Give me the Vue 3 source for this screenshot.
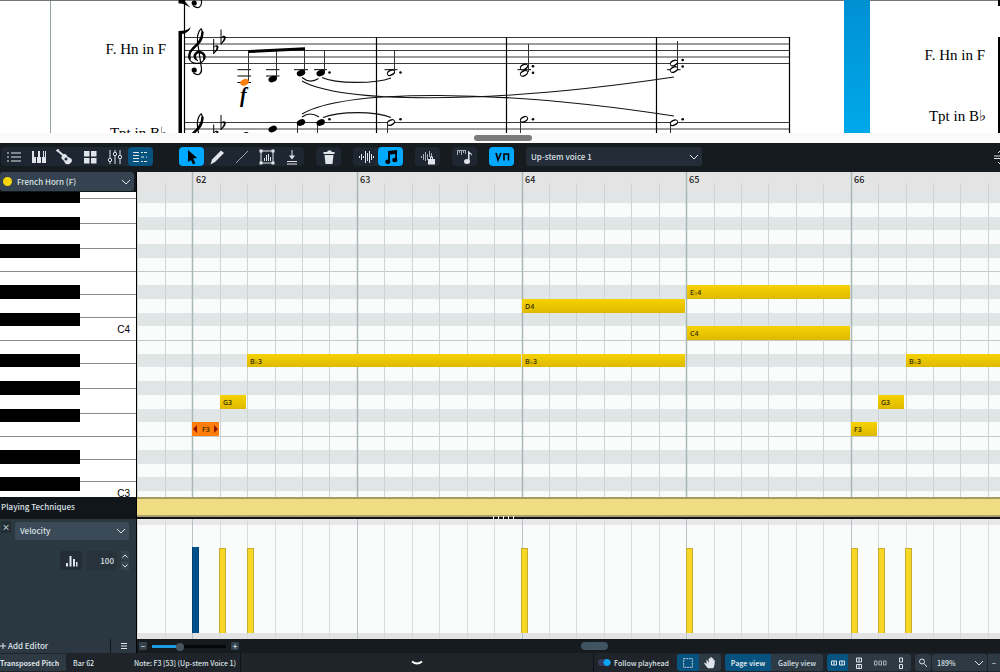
<template>
  <div class="app">
    <svg class="score" role="img" aria-label="Score">
      <defs>
        <linearGradient id="pageGap" x1="0" y1="0" x2="0" y2="1">
          <stop offset="0" stop-color="#0090d2" />
          <stop offset="1" stop-color="#00a9ea" />
        </linearGradient>
        <g id="clef" fill="none" stroke="#000" stroke-linecap="round">
          <path d="M-1 35.5C4 39 7.500 36 7 31L3 4C2 -4 6 -9 7 -8.500C9 -3 8 3 3 7.500C-2 11.500 -6 14.500 -5.500 20C-4.500 27 7 28 9.800 21.500C11 15.500 4 12.500 1 16.500C-.5 19.500 1 22 3 23" stroke-width="1.200" />
          <path d="M8 -5C8 2 2 8 -2 11.500C-5 14.500 -5.500 18 -4.800 21" stroke-width="2.400" />
          <path d="M9.800 21C11 15.500 4 12.500 1 16.500C0 18 .2 20 1 21" stroke-width="2.400" />
          <circle cx="-.3" cy="32.500" r="2.600" fill="#000" stroke="none" />
        </g>
        <g id="flat">
          <path d="M0 0V15" stroke="#000" stroke-width="1" />
          <path d="M0 8C2 5.500 5 6 4.800 8.500C4.600 11 2 13 0 15V13.500C1.500 12 2.800 10 2.800 8.500C2.800 7 1.200 7.500 0 9Z" />
        </g>
        <ellipse id="head" rx="4.400" ry="3.100" transform="rotate(-24)" />
        <g id="half" transform="rotate(-28)">
          <ellipse rx="4.300" ry="3" />
          <ellipse rx="3.500" ry="1.600" fill="#fff" />
        </g>
      </defs>

      <path d="M0 .5H3000" stroke="#777" />
      <path d="M50.500 1V133" stroke="#8fa3a5" />
      <path v-for="y in staffLines" :key="y" :d="`M184 ${y}H790`" stroke="#222" stroke-width=".9" />
      <path d="M184.500 0V133M376.500 37V133M506.500 37V133M656.500 37V133M789.500 37V133" stroke="#000" stroke-width="1.200" />
      <path d="M178.500 31H182V133H178.500ZM178.500 31C184 31 188 30 190.500 27C190 31 186 33.500 182 34H178.500Z" />
      <path d="M178.500 0H184C186 3 188 5 190.500 7.500C187 6 184 3.500 181 3.500H178.500Z" />
      <use href="#clef" x="194.500" y="-29.500" />
      <use href="#clef" x="194.500" y="37.500" />
      <use href="#clef" x="194.500" y="122.500" />
      <use href="#flat" x="213.700" y="39" />
      <use href="#flat" x="221" y="29.500" />
      <use href="#flat" x="213.700" y="124.500" />
      <use href="#flat" x="221" y="115" />

      <path d="M237.500 69.700H251M237.500 76H251M237.500 82.500H251M266 69.700H279.500M266 76H279.500M294 69.700H308M314 69.700H327M384.500 69.700H397.500M517.500 69.700H531M667 69.700H680.500" stroke="#000" />
      <path d="M248.500 51V81M276.500 51V78M304.500 49V72M324.500 51V72M394.500 51V72M528.500 44V72M677.500 41V69M297.500 123V133M317.500 123V133M387.500 123V133M520.500 120V133M670.500 123V133" stroke="#333" />
      <path d="M248.500 50L305 47.300V50.300L248.500 53Z" />
      <use v-for="(n, i) in heads" :key="'h' + i" href="#head" :transform="`translate(${n[0]} ${n[1]})`" :fill="i === 0 ? '#ff7f0e' : '#000'" />
      <use v-for="(n, i) in halves" :key="'o' + i" href="#half" :transform="`translate(${n[0]} ${n[1]})`" />
      <circle v-for="(n, i) in dots" :key="'d' + i" :cx="n[0]" :cy="n[1]" r="1.300" />
      <g fill="none" stroke="#111">
        <path d="M302 77.500Q310 84 318.500 78.500M322 77.500C336 84 375 84 391 78M302 117Q310 111 319 117M323 117.500C340 111 375 111 391 117.500" stroke-width="1.200" />
        <path d="M302 81C340 102 480 106 674 77M302 114C345 89 500 89 674 116" stroke-width="1.100" />
      </g>
      <text x="240" y="102" class="dynamic">f</text>
      <text x="166" y="54" class="staff-name">F. Hn in F</text>
      <text x="167" y="138" class="staff-name">Tpt in B♭</text>

      <rect x="844" y="0" width="26" height="133" fill="url(#pageGap)" />
      <text x="985" y="60" class="staff-name">F. Hn in F</text>
      <text x="986" y="121" class="staff-name">Tpt in B♭</text>
      <path d="M998 0H1000V6H998ZM998 37H1000V133H998Z" />
    </svg>

    <div class="splitter"><span></span></div>

    <nav class="toolbar">
      <div class="group panels">
        <button aria-label="Track list"><svg viewBox="0 0 18 16"><path d="M6 4H16M6 8H16M6 12H16M2 4H4M2 8H4M2 12H4" class="line" /></svg></button>
        <button aria-label="Keyboard"><svg viewBox="0 0 18 16"><path d="M2 2H4V8H6V14H2ZM7 8H8V2H10V8H11V14H7ZM12 8H13V2H14V8H16V14H12Z" /><path d="M15 2H16V14H15Z" /></svg></button>
        <button aria-label="Fretboard"><svg viewBox="0 0 18 16"><path d="M2 1L9 7" stroke="#dfe5ea" stroke-width="2" /><path d="M1 2L4 0" class="line" /><path d="M7 7C8 4 12 5 12 7C13 9 16 8 17 11C17 14 14 16 11 15C9 14 10 12 8 11C6 10 6 8 7 7Z" /><circle cx="11" cy="10" r="1.500" fill="#1f2a35" /></svg></button>
        <button aria-label="Drum pads"><svg viewBox="0 0 18 16"><path d="M3 2H8.500V7.500H3ZM10 2H15.500V7.500H10ZM3 9H8.500V14.500H3ZM10 9H15.500V14.500H10Z" /></svg></button>
        <button aria-label="Mixer"><svg viewBox="0 0 18 16"><path d="M4 1V9M4 13V15M9 1V3M9 7V15M14 1V6M14 10V15" class="line" /><g fill="none" class="line"><circle cx="4" cy="11" r="1.700" /><circle cx="9" cy="5" r="1.700" /><circle cx="14" cy="8" r="1.700" /></g></svg></button>
        <button class="on-dark" aria-label="Key editor"><svg viewBox="0 0 18 16"><path d="M2 3.500H8M2 6.500H8M2 9.500H8M2 12.500H8M10 3.500H12M10 8H13M10 12.500H12M13 3.500H16M15 8H16M13 12.500H16" class="line" /></svg></button>
      </div>
      <div class="group tools">
        <button class="on" aria-label="Select"><svg viewBox="0 0 18 16"><path d="M5 1L14 9L10 9.500L12.500 14L10 15.500L8 11L5 13Z" fill="#000" /></svg></button>
        <button aria-label="Draw"><svg viewBox="0 0 18 16"><path d="M13 1.500L16 4L7 13L2.500 15.500L4 10.500Z" /></svg></button>
        <button aria-label="Line"><svg viewBox="0 0 18 16"><path d="M3 14L15 2" stroke="#9aa5ad" /></svg></button>
        <button aria-label="Transform"><svg viewBox="0 0 18 16"><path d="M3 2H15V14H3Z" fill="none" class="line" /><path d="M1.500 .5H4.500V3.500H1.500ZM13.500 .5H16.500V3.500H13.500ZM1.500 12.500H4.500V15.500H1.500ZM13.500 12.500H16.500V15.500H13.500Z" /><path d="M6.500 9V12M8.500 6V12M10.500 5V12M12.500 8V12" class="line" /></svg></button>
        <button aria-label="Quantize"><svg viewBox="0 0 18 16"><path d="M9 1V9M4 12.500H14M4 15H14" class="line" /><path d="M6 6.500H12L9 10.500Z" /></svg></button>
      </div>
      <div class="group"><button aria-label="Delete"><svg viewBox="0 0 18 16"><path d="M3.500 3H7L8 1.500H11L12 3H14.500V5H3.500ZM4.500 6H13.500L12.500 15H5.500Z" /></svg></button></div>
      <div class="group">
        <button aria-label="Played durations"><svg viewBox="0 0 18 16"><path d="M2.500 7V9M4.500 5V11M6.500 7V9M8.500 2V14M10.500 4V12M12.500 2V14M14.500 5V11M16.500 7V9" class="line" /></svg></button>
        <button class="on" aria-label="Notated durations"><svg viewBox="0 0 18 16"><path d="M6 2L15 1V11H13.200V5L8 5.600V13H6.200Z" fill="#000" /><ellipse cx="5.800" cy="12.700" rx="2.600" ry="2.200" fill="#000" /><ellipse cx="12.800" cy="11" rx="2.600" ry="2.200" fill="#000" /></svg></button>
      </div>
      <div class="group"><button aria-label="Lock durations"><svg viewBox="0 0 18 16"><path d="M2.500 7V9M4.500 5V11M6.500 3V12M8.500 5V11M10.500 2V8M12.500 4V8" class="line dim" /><path d="M9 10H16V15.500H9ZM11 10V8.500A1.500 1.500 0 0 1 14 8.500V10H13V8.800H12V10Z" /></svg></button></div>
      <div class="group"><button aria-label="Chord input"><svg viewBox="0 0 18 16"><path d="M1.500 1V6M3.500 1V4M5.500 1V6M7.500 1V4M9.500 1V5M1 1.500H10" class="line dim" /><path d="M12 1C12 3 17 4 16 7C15.500 5.500 14.500 5 13.500 5V12H12Z" /><ellipse cx="11" cy="12.500" rx="3" ry="2.500" /></svg></button></div>
      <div class="group"><button class="on" aria-label="Voices"><svg viewBox="0 0 18 16"><path d="M3 4L5 11L8 4" fill="none" stroke="#000" stroke-width="1.600" /><path d="M11 11.500V5H15.500V11.500" fill="none" stroke="#000" stroke-width="1.600" /></svg></button></div>
      <div class="drop voice">
        <select v-model="voice" aria-label="Voice"><option>Up-stem voice 1</option></select>
        <svg viewBox="0 0 10 10"><path d="M1 3L5 7L9 3" /></svg>
      </div>
      <svg class="edge-icon" viewBox="0 0 6 16"><path d="M0 7H6M0 9.500H6M4 4L6 2M4 13L6 15" class="line" /></svg>
    </nav>

    <main class="editor">
      <aside class="side">
        <div class="drop instrument">
          <i></i>
          <select v-model="instrument" aria-label="Instrument"><option>French Horn (F)</option></select>
          <svg viewBox="0 0 10 10"><path d="M1 3L5 7L9 3" /></svg>
        </div>
        <svg class="keyboard" role="img" aria-label="Keyboard">
          <path v-for="y in keyLines" :key="y" :d="`M0 ${y}.5H136`" stroke="#8a8a8a" />
          <rect v-for="m in blackKeys" :key="m" x="0" :y="top(m)" width="80" :height="top(m - 1) - top(m)" />
          <text x="130" y="141">C4</text>
          <text x="130" y="305">C3</text>
        </svg>
        <h2>Playing Techniques</h2>
        <section class="velocity">
          <button class="close" aria-label="Close">×</button>
          <div class="drop">
            <select v-model="lane" aria-label="Editor"><option>Velocity</option></select>
            <svg viewBox="0 0 10 10"><path d="M1 3L5 7L9 3" /></svg>
          </div>
          <div class="value">
            <button class="hist" aria-label="Histogram"><svg viewBox="0 0 18 16"><path d="M4 10H6V13.500H4ZM7.500 3H9.500V13.500H7.500ZM11 6H13V13.500H11ZM14 9H15.500V13.500H14Z" /></svg></button>
            <input v-model="velocity" type="text" aria-label="Velocity value">
            <div class="spin">
              <button aria-label="Increase"><svg viewBox="0 0 8 8"><path d="M1.500 5.500L4 3L6.500 5.500" /></svg></button>
              <button aria-label="Decrease"><svg viewBox="0 0 8 8"><path d="M1.500 2.500L4 5L6.500 2.500" /></svg></button>
            </div>
          </div>
        </section>
        <div class="add">
          <button><svg viewBox="0 0 8 8"><path d="M0 4H6M3 1V7" /></svg>Add Editor</button>
          <button class="menu" aria-label="Editor menu"><svg viewBox="0 0 8 8"><path d="M1 1.500H7M1 4H7M1 6.500H7" /></svg></button>
        </div>
      </aside>

      <div class="lanes">
        <svg class="roll" role="img" aria-label="Piano roll">
          <defs>
            <linearGradient id="noteFill" x1="0" y1="0" x2="0" y2="1">
              <stop offset="0" stop-color="#f6d204" />
              <stop offset="1" stop-color="#deb900" />
            </linearGradient>
          </defs>
          <rect width="100%" height="100%" fill="#fafbfb" />
          <rect v-for="m in blackKeys" :key="m" x="0" :y="top(m) + 20" width="100%" :height="top(m - 1) - top(m)" fill="#e0e5e5" />
          <rect width="100%" height="21" fill="#e4e4e4" />
          <path d="M0 99.500H3000M0 168.500H3000M0 264.500H3000" stroke="#c3caca" />
          <path v-for="b in beats" :key="b.x" :d="`M${b.x}.5 ${b.bar ? 0 : 11}V325`" :stroke="b.bar ? '#a9b7b7' : '#ccd4d4'" :stroke-width="b.bar ? 1.500 : 1" />
          <text v-for="(n, i) in [62, 63, 64, 65, 66]" :key="n" :x="barX(i) + 3" y="11" class="bar-no">{{ n }}</text>
          <g v-for="(n, i) in notes" :key="'n' + i">
            <rect :x="n.x" :y="top(n.m) + 20" :width="n.w" :height="top(n.m - 1) - top(n.m)" :fill="n.selected ? '#ff7d0a' : 'url(#noteFill)'" />
            <text :x="n.x + (n.selected ? 10 : 3)" :y="top(n.m) + 30" class="note">{{ n.name }}</text>
            <path v-if="n.selected" :d="`M${n.x + 1} ${top(n.m) + 27}l4 -4v8zM${n.x + 26} ${top(n.m) + 27}l-4 -4v8z`" fill="#8c1500" />
          </g>
        </svg>
        <div class="technique"><span></span></div>
        <svg class="bars" role="img" aria-label="Velocity">
          <rect width="100%" height="100%" fill="#fafbfb" />
          <rect width="100%" height="6" fill="#e9e7ea" />
          <rect y="114" width="100%" height="6" fill="#e3e3e3" />
          <path v-for="b in beats" :key="b.x" :d="`M${b.x}.5 0V120`" :stroke="b.bar ? '#b9c2c5' : '#d8dcde'" />
          <g v-for="(x, i) in velocityBars" :key="x">
            <rect :x="x" :y="i ? 29 : 28" :width="7" :height="i ? 85 : 86" :fill="i ? '#c4ad2c' : '#003f70'" />
            <rect :x="x + 1" :y="i ? 30 : 28" width="5" :height="i ? 84 : 86" :fill="i ? '#f7d827' : '#00508c'" />
          </g>
        </svg>
        <div class="scroll">
          <button aria-label="Zoom out">−</button>
          <input v-model="zoom" type="range" min="0" max="100" aria-label="Zoom">
          <button aria-label="Zoom in">+</button>
          <div class="track"><span></span></div>
        </div>
      </div>
    </main>

    <footer class="status">
      <div class="info">
        <button class="pitch">Transposed Pitch</button>
        <span>Bar 62</span>
        <span class="note-info">Note: F3 [53] (Up-stem Voice 1)</span>
      </div>
      <button class="fold" aria-label="Hide panel"><svg viewBox="0 0 12 6"><path d="M1 1.500Q6 5.500 11 1.500" /></svg></button>
      <div class="view">
        <label class="follow"><input v-model="follow" type="checkbox"><span>Follow playhead</span></label>
        <div class="set square">
          <button class="on-dark" aria-label="Marquee"><svg viewBox="0 0 16 16"><path d="M3 3H13V13H3Z" fill="none" class="line" stroke-dasharray="2 1" /></svg></button>
          <button aria-label="Hand"><svg viewBox="0 0 16 16"><path d="M4 9L2 7.500C1 7.500 1.500 9 2 9.500L5.500 14H11.500C13 12 13.500 9 13.500 5C13 4 12 4.500 12 5.500V3C11.500 2 10.500 2 10.300 3V2C9.500 .8 8.500 1 8.300 2V3C7.500 2 6.500 2.500 6.500 3.500V8C6 7 4.500 3.500 4 4Z" /></svg></button>
        </div>
        <div class="set words">
          <button class="on-dark">Page view</button>
          <button>Galley view</button>
        </div>
        <div class="set arrange">
          <button class="on-dark" aria-label="Spreads horizontal"><svg viewBox="0 0 16 14"><path d="M1.500 5H6.500V9H1.500ZM4 5V9M9.500 5H14.500V9H9.500ZM12 5V9" /></svg></button>
          <button aria-label="Spreads vertical"><svg viewBox="0 0 16 14"><path d="M5.500 2H10.500V6H5.500ZM8 2V6M5.500 8.500H10.500V12.500H5.500ZM8 8.500V12.500" /></svg></button>
          <button aria-label="Single pages horizontal"><svg viewBox="0 0 16 14" class="dim"><path d="M2.500 5H5V9H2.500ZM7 5H9.500V9H7ZM11.500 5H14V9H11.500Z" /></svg></button>
          <button aria-label="Single pages vertical"><svg viewBox="0 0 16 14"><path d="M6.500 2H9.500V6H6.500ZM6.500 8.500H9.500V12.500H6.500Z" /></svg></button>
        </div>
        <div class="set find"><button aria-label="Find"><svg viewBox="0 0 16 14"><circle cx="7" cy="5.500" r="2.500" /><path d="M9 7.500L12 11" /></svg></button></div>
        <div class="drop zoom">
          <select v-model="scale" aria-label="Page zoom"><option>189%</option></select>
          <svg viewBox="0 0 10 10"><path d="M1 3L5 7L9 3" /></svg>
        </div>
        <button class="less" aria-label="Reduce zoom">−</button>
      </div>
    </footer>
  </div>
</template>

<script setup>
import { ref } from 'vue'

const voice = ref('Up-stem voice 1')
const instrument = ref('French Horn (F)')
const lane = ref('Velocity')
const velocity = ref('100')
const zoom = ref(37)
const follow = ref(true)
const scale = ref('189%')

// score
const staffLines = [37.5, 44, 50.5, 57, 63.5, 122.5, 129]
const heads = [[244.5, 82.3], [272.7, 79], [301, 73], [320.7, 73], [245, 135.5], [272.7, 129], [301, 122.5], [320.7, 122.5]]
const halves = [[391, 72.7], [524, 67], [524, 73.3], [674, 63], [674, 69.5], [391, 122.5], [524, 119.3], [674, 122.7]]
const dots = [
  [329.5, 72.5], [400.5, 72.5], [533, 66.3], [533, 72.7], [682.7, 60], [682.7, 66.5],
  [329.5, 119.3], [400.5, 119.3], [533, 119.3], [682.7, 119.3]
]

// piano roll: one row per semitone, measured from the top of the keyboard
const top = (midi) => Math.max(0, Math.round(134.3 + (60 - midi) * 13.72))
const blackKeys = [70, 68, 66, 63, 61, 58, 56, 54, 51, 49]
const keyLines = [6, 31, 56, 79, 102, 125, 148, 171, 196, 221, 244, 267, 289]

const BAR = 164.6
const barX = (i) => Math.round(55.5 + i * BAR)
const beats = []
for (let i = -2; i < 80; i++) {
  beats.push({ x: Math.round(55.3 + i * BAR / 6), bar: i % 6 === 0 })
}

const notes = [
  { name: 'F3', m: 53, x: 55, w: 27, selected: true },
  { name: 'G3', m: 55, x: 83, w: 26 },
  { name: 'B♭3', m: 58, x: 110, w: 274 },
  { name: 'B♭3', m: 58, x: 385, w: 163 },
  { name: 'D4', m: 62, x: 385, w: 163 },
  { name: 'E♭4', m: 63, x: 550, w: 163 },
  { name: 'C4', m: 60, x: 550, w: 163 },
  { name: 'F3', m: 53, x: 714, w: 26 },
  { name: 'G3', m: 55, x: 741, w: 26 },
  { name: 'B♭3', m: 58, x: 769, w: 274 }
]
const velocityBars = [55, 82, 110, 384, 549, 714, 741, 768]
</script>

<style>
body {
  margin: 0;
  background: #161b1f;
}
</style>

<style scoped>
.app {
  display: flex;
  flex-direction: column;
  overflow: hidden;
  font-family: "Noto Sans CJK SC", "Noto Sans", sans-serif;
  font-size: 8px;
  font-weight: 500;
  line-height: 12px;
  color: #dbe1e6;
  background: #161b1f;
}

button,
select,
input {
  margin: 0;
  padding: 0;
  border: 0;
  font: inherit;
  color: inherit;
  background: none;
}

button {
  display: flex;
  align-items: center;
  justify-content: center;
}

.line {
  stroke: #dfe5ea;
}

.dim {
  opacity: 0.7;
}

/* score */
.score {
  display: block;
  width: 100%;
  height: 133px;
  background: #fff;
}

.staff-name {
  font: 15px "Liberation Serif", "DejaVu Serif", serif;
  text-anchor: end;
}

.dynamic {
  font: italic bold 20px "Liberation Serif", serif;
}

.splitter {
  display: flex;
  justify-content: center;
  height: 10px;
  background: #fafafa;
}

.splitter span {
  width: 58px;
  height: 6px;
  margin-top: 2px;
  margin-left: 6px;
  border-radius: 3px;
  background: #7b7b7b;
}

/* toolbar */
.toolbar {
  display: flex;
  align-items: center;
  gap: 12px;
  box-sizing: border-box;
  height: 29px;
  padding: 0 0 2px 1px;
}

.group {
  display: flex;
  flex: none;
  border-radius: 4px;
  background: #1e2731;
}

.group button {
  flex: 1;
  min-width: 25px;
  height: 19px;
  border-radius: 4px;
}

.group svg {
  width: 18px;
  height: 16px;
  fill: #dfe5ea;
}

.panels {
  width: 152px;
  margin-right: 14px;
}

.tools {
  width: 125px;
}

button.on {
  background: #00a8ff;
}

button.on-dark {
  background: #075380;
}

.drop {
  position: relative;
  display: flex;
  align-items: center;
  border-radius: 3px;
  background: #34434f;
}

.drop select {
  flex: 1;
  min-width: 0;
  height: 100%;
  padding-left: 5px;
  appearance: none;
}

.drop svg {
  position: absolute;
  right: 3px;
  width: 10px;
  height: 10px;
  fill: none;
  stroke: #dfe5ea;
  pointer-events: none;
}

.voice {
  width: 176px;
  height: 19px;
  background: #232c37;
}

.edge-icon {
  width: 6px;
  height: 16px;
  margin-left: auto;
}

/* editor */
.editor {
  display: flex;
}

.side {
  flex: none;
  width: 136px;
  border-right: 1px solid #000;
  background: #11161a;
}

.instrument {
  height: 19px;
  margin: 0 2px 1px 0;
  padding-left: 3px;
}

.instrument i {
  width: 9px;
  height: 9px;
  border-radius: 50%;
  background: #f8d60c;
}

.keyboard {
  display: block;
  width: 100%;
  height: 305px;
  background: #fff;
}

.keyboard text {
  font: 10px "Liberation Sans", sans-serif;
  text-anchor: end;
}

h2 {
  height: 22px;
  margin: 0;
  padding-left: 1px;
  font-size: 8px;
  font-weight: 500;
  line-height: 20px;
}

.velocity {
  position: relative;
  height: 117px;
  padding: 3px 7px 0 15px;
  background: #2a3840;
}

.velocity .drop {
  height: 18px;
  background: #3a4a57;
}

.close {
  position: absolute;
  top: 2px;
  left: 1px;
  width: 10px;
  height: 12px;
  background: #222d34;
}

.value {
  display: flex;
  align-items: center;
  justify-content: flex-end;
  gap: 4px;
  margin-top: 10px;
}

.hist {
  width: 22px;
  height: 19px;
  border-radius: 3px;
  background: #222d37;
}

.hist svg {
  width: 18px;
  height: 16px;
  fill: #dfe5ea;
}

.value input {
  width: 28px;
  height: 19px;
  padding-right: 3px;
  border-radius: 3px;
  text-align: right;
  background: #27333b;
}

.spin button {
  width: 8px;
  height: 9px;
  margin: 1px 0;
  background: #36444e;
}

.spin svg {
  width: 8px;
  height: 8px;
  fill: none;
  stroke: #dfe5ea;
}

.add {
  display: flex;
  gap: 1px;
  height: 14px;
}

.add button {
  flex: 1;
  justify-content: flex-start;
  background: #2b3741;
}

.add .menu {
  flex: none;
  justify-content: center;
  width: 25px;
}

.add svg {
  width: 8px;
  height: 8px;
  stroke: #dfe5ea;
}

.lanes {
  flex: 1;
  min-width: 0;
}

.roll {
  display: block;
  width: 100%;
  height: 325px;
}

.bar-no {
  fill: #222;
  font-size: 9px;
}

.note {
  fill: #3c3000;
  font: 600 7px "Open Sans", "DejaVu Sans", sans-serif;
}

.technique {
  box-sizing: border-box;
  display: flex;
  align-items: flex-end;
  justify-content: center;
  height: 22px;
  border-top: 2px solid #a59c60;
  border-bottom: 2px solid #111;
  background: #efdc83;
  box-shadow: inset 0 -2px #aaa070;
}

.technique span {
  position: relative;
  top: 2px;
  width: 24px;
  height: 3px;
  margin-right: 127px;
  background: repeating-linear-gradient(90deg, #fff 0 1px, transparent 1px 5px);
}

.bars {
  display: block;
  width: 100%;
  height: 120px;
}

.scroll {
  display: flex;
  align-items: center;
  height: 14px;
  padding-left: 2px;
}

.scroll button {
  width: 8px;
  height: 8px;
  border-radius: 1px;
  line-height: 8px;
  background: #33414c;
}

.scroll input {
  width: 74px;
  height: 8px;
  margin: 0 5px;
  appearance: none;
}

.scroll input::-webkit-slider-runnable-track {
  height: 3px;
  background: linear-gradient(90deg, #1c9be0 37%, #040607 37%);
}

.scroll input::-webkit-slider-thumb {
  width: 8px;
  height: 8px;
  margin-top: -2px;
  border-radius: 50%;
  appearance: none;
  background: #48545e;
}

.track {
  flex: 1;
}

.track span {
  display: block;
  width: 27px;
  height: 8px;
  margin-left: 45%;
  border-radius: 4px;
  background: #405360;
}

/* status bar */
.status {
  display: flex;
  height: 19px;
  font-size: 7px;
  white-space: nowrap;
  background: #1e2429;
}

.info {
  display: flex;
  align-items: center;
  gap: 7px;
  width: 240px;
  border-right: 1px solid #0e1214;
}

.pitch {
  justify-content: flex-start;
  width: 66px;
  height: 17px;
  font-weight: 700;
  background: #2d3943;
}

.note-info {
  margin-left: auto;
  padding-right: 4px;
}

.fold {
  flex: 1;
}

.fold svg {
  width: 12px;
  height: 6px;
  fill: none;
  stroke: #fff;
  stroke-width: 2px;
}

.view {
  display: flex;
  align-items: center;
  gap: 4px;
  border-left: 1px solid #0e1214;
}

.follow {
  display: flex;
  align-items: center;
  gap: 3px;
  margin: 0 4px;
}

.follow input {
  width: 13px;
  height: 7px;
  border-radius: 4px;
  appearance: none;
  background: radial-gradient(circle at 9px 50%, #0aa5f5 3px, #343b5c 4px);
}

.set {
  display: flex;
  height: 17px;
  border-radius: 3px;
  overflow: hidden;
  background: #2d3943;
}

.set svg {
  width: 16px;
  height: 14px;
  fill: #dfe5ea;
}

.square button {
  width: 22px;
}

.words button {
  width: 52px;
}

.words .on-dark {
  width: 46px;
  font-weight: 700;
}

.arrange button {
  width: 21px;
}

.arrange svg,
.find svg {
  fill: none;
  stroke: #dfe5ea;
}

.find button {
  width: 16px;
}

.zoom {
  width: 55px;
  height: 17px;
  margin-left: -3px;
  background: #2d3943;
}

.less {
  width: 12px;
  height: 17px;
  margin-left: -3px;
  background: #2d3943;
}
</style>
